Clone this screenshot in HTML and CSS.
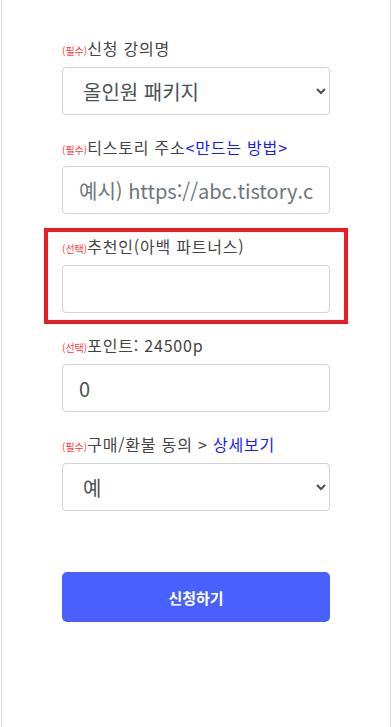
FILE: index.html
```html
<!DOCTYPE html>
<html lang="ko">
<head>
<meta charset="utf-8">
<meta name="viewport" content="width=device-width, initial-scale=1">
<title>신청</title>
<link rel="stylesheet" href="styles.css">
</head>
<body>
<div class="page">
  <form class="apply-form">
    <div class="group">
      <label class="label"><span class="tag">(필수)</span>신청 강의명</label>
      <select class="control control-select">
        <option>올인원 패키지</option>
      </select>
    </div>
    <div class="group">
      <label class="label"><span class="tag">(필수)</span>티스토리 주소<a class="link" href="#">&lt;만드는 방법&gt;</a></label>
      <input class="control" type="text" placeholder="예시) https://abc.tistory.com">
    </div>
    <div class="group highlight">
      <label class="label"><span class="tag">(선택)</span>추천인(아백 파트너스)</label>
      <input class="control" type="text">
    </div>
    <div class="group">
      <label class="label"><span class="tag">(선택)</span>포인트: 24500p</label>
      <input class="control" type="text" value="0">
    </div>
    <div class="group">
      <label class="label"><span class="tag">(필수)</span>구매/환불 동의 &gt; <a class="link" href="#">상세보기</a></label>
      <select class="control control-select">
        <option>예</option>
      </select>
    </div>
    <button class="submit" type="button">신청하기</button>
  </form>
</div>
</body>
</html>
```
FILE: styles.css
```css
* { box-sizing: border-box; }
html, body { margin: 0; padding: 0; background: #fff; }
body {
  font-family: "Noto Sans CJK KR", "Noto Sans", sans-serif;
  color: #444;
}
.page {
  margin-left: 1px;
  width: 390px;
  min-height: 727px;
  border-left: 1px solid #d9d9d9;
  border-right: 1px solid #d9d9d9;
  padding: 37px 60px 40px 60px;
}
.apply-form {
  display: flex;
  flex-direction: column;
}
.group {
  display: flex;
  flex-direction: column;
  margin-bottom: 21px;
}
.label {
  display: block;
  font-size: 16px;
  letter-spacing: 0.8px;
  line-height: 22px;
  height: 22px;
  margin-bottom: 8px;
  color: #444;
  white-space: nowrap;
}
.tag {
  font-size: 10px;
  letter-spacing: 0;
  color: #ff3b3b;
}
.link {
  color: #1a1aff;
  text-decoration: none;
}
.control {
  display: block;
  width: 100%;
  height: 48px;
  padding: 8px 16px;
  font-family: inherit;
  font-size: 20px;
  line-height: 30px;
  color: #495057;
  background: #fff;
  border: 1px solid #ced4da;
  border-radius: 4px;
  outline: none;
}
.control::placeholder { color: #6c757d; }
.control-select { padding-left: 16px; padding-right: 6px; }
.highlight {
  margin: -7px -18px 10px;
  padding: 3px 14px 7px;
  border: 4px solid #ec1c24;
}
.submit {
  margin-top: 40px;
  height: 50px;
  width: 100%;
  border: none;
  border-radius: 5px;
  background: #4861fd;
  color: #fff;
  font-family: inherit;
  font-size: 15px;
  font-weight: 700;
}
```
